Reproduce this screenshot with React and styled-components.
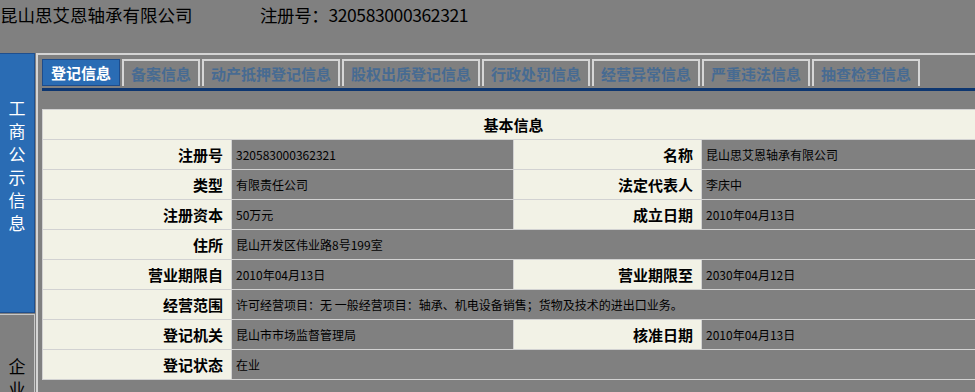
import styled, { createGlobalStyle } from "styled-components";

const GlobalStyle = createGlobalStyle`
	html, body {
		margin: 0;
		padding: 0;
		background: #808080;
		overflow: hidden;
	}
	body {
		font-family: "Noto Sans CJK SC", "Liberation Sans", sans-serif;
		color: #000;
	}
`;

const tabs = [
	"登记信息",
	"备案信息",
	"动产抵押登记信息",
	"股权出质登记信息",
	"行政处罚信息",
	"经营异常信息",
	"严重违法信息",
	"抽查检查信息",
];

const App = () => {
	return (
		<S.Page>
			<GlobalStyle />
			<S.Header>
				<S.Company>昆山思艾恩轴承有限公司</S.Company>
				<S.RegNo>注册号：320583000362321</S.RegNo>
			</S.Header>
			<S.Body>
				<S.Sidebar>
					<S.SideItem $active>
						<S.SideText>工商公示信息</S.SideText>
					</S.SideItem>
					<S.SideItem>
						<S.SideText>企业公示信息</S.SideText>
					</S.SideItem>
				</S.Sidebar>
				<S.Main>
					<S.Tabs>
						{tabs.map((t, i) => (
							<S.Tab key={t} $active={i === 0}>
								{t}
							</S.Tab>
						))}
					</S.Tabs>
					<S.TabLine />
					<S.InfoTable>
						<colgroup>
							<S.Col $w={189} />
							<S.Col $w={282} />
							<S.Col $w={188} />
							<S.Col $w={283} />
						</colgroup>
						<tbody>
							<tr>
								<S.HeadCell colSpan={4}>基本信息</S.HeadCell>
							</tr>
							<tr>
								<S.Label>注册号</S.Label>
								<S.Value>320583000362321</S.Value>
								<S.Label>名称</S.Label>
								<S.Value>昆山思艾恩轴承有限公司</S.Value>
							</tr>
							<tr>
								<S.Label>类型</S.Label>
								<S.Value>有限责任公司</S.Value>
								<S.Label>法定代表人</S.Label>
								<S.Value>李庆中</S.Value>
							</tr>
							<tr>
								<S.Label>注册资本</S.Label>
								<S.Value>50万元</S.Value>
								<S.Label>成立日期</S.Label>
								<S.Value>2010年04月13日</S.Value>
							</tr>
							<tr>
								<S.Label>住所</S.Label>
								<S.Value colSpan={3}>昆山开发区伟业路8号199室</S.Value>
							</tr>
							<tr>
								<S.Label>营业期限自</S.Label>
								<S.Value>2010年04月13日</S.Value>
								<S.Label>营业期限至</S.Label>
								<S.Value>2030年04月12日</S.Value>
							</tr>
							<tr>
								<S.Label>经营范围</S.Label>
								<S.Value colSpan={3}>
									许可经营项目：无 一般经营项目：轴承、机电设备销售；货物及技术的进出口业务。
								</S.Value>
							</tr>
							<tr>
								<S.Label>登记机关</S.Label>
								<S.Value>昆山市市场监督管理局</S.Value>
								<S.Label>核准日期</S.Label>
								<S.Value>2010年04月13日</S.Value>
							</tr>
							<tr>
								<S.Label>登记状态</S.Label>
								<S.Value colSpan={3}>在业</S.Value>
							</tr>
						</tbody>
					</S.InfoTable>
				</S.Main>
			</S.Body>
		</S.Page>
	);
};

export default App;

const Page = styled.div`
	width: 1000px;
	height: 392px;
	overflow: hidden;
`;

const Header = styled.div`
	display: flex;
	align-items: flex-start;
	height: 53px;
	font-size: 17.5px;
	line-height: 29px;
	white-space: nowrap;
`;

const Company = styled.div`
	width: 260px;
`;

const RegNo = styled.div`
	letter-spacing: -0.4px;
`;

const Body = styled.div`
	display: flex;
	align-items: flex-start;
`;

const Sidebar = styled.div`
	width: 35px;
	display: flex;
	flex-direction: column;
	gap: 1px;
`;

const SideItem = styled.div`
	box-sizing: border-box;
	height: ${p => (p.$active ? "260px" : "120px")};
	background: ${p => (p.$active ? "#2a6cb4" : "#808080")};
	border: 1px solid ${p => (p.$active ? "#1f4f8e" : "#c8c8c8")};
	border-left: none;
	padding-top: ${p => (p.$active ? "42px" : "39px")};
	color: ${p => (p.$active ? "#fff" : "#000")};
`;

const SideText = styled.div`
	width: 17px;
	margin: 0 auto;
	font-size: 17px;
	line-height: 23px;
	text-align: center;
`;

const Main = styled.div`
	flex: 1;
	margin-left: 1px;
	height: 400px;
	border-left: 2px solid #d4d4d4;
	border-top: 2px solid #d4d4d4;
	padding: 4px 0 0 4px;
`;

const Tabs = styled.div`
	display: flex;
	gap: 2px;
	height: 27px;
`;

const Tab = styled.div`
	box-sizing: border-box;
	height: 27px;
	padding: ${p => (p.$active ? "0 8px" : "0 7px")};
	border: ${p => (p.$active ? "1px solid #1d4c8c" : "2px solid #d6d6d6")};
	border-bottom: ${p => (p.$active ? "1px solid #1d4c8c" : "none")};
	background: ${p => (p.$active ? "#2a6cb4" : "transparent")};
	color: ${p => (p.$active ? "#fff" : "#476b92")};
	font-size: 15px;
	font-weight: bold;
	line-height: 25px;
	white-space: nowrap;
`;

const TabLine = styled.div`
	margin-top: 2px;
	height: 3px;
	background: #0d3670;
`;

const InfoTable = styled.table`
	margin-top: 18px;
	width: 942px;
	table-layout: fixed;
	border-collapse: collapse;
	td {
		height: 30px;
		border: 1px solid #d2d2d2;
		box-sizing: border-box;
		white-space: nowrap;
	}
`;

const Col = styled.col`
	width: ${p => p.$w}px;
`;

const HeadCell = styled.td`
	background: #f2f2e6;
	text-align: center;
	font-size: 15px;
	font-weight: bold;
`;

const Label = styled.td`
	background: #f2f2e6;
	text-align: right;
	padding: 0 8px 0 0;
	font-size: 15px;
	font-weight: bold;
`;

const Value = styled.td`
	padding: 0 0 0 4px;
	font-size: 12px;
`;

const S = {
	Page,
	Header,
	Company,
	RegNo,
	Body,
	Sidebar,
	SideItem,
	SideText,
	Main,
	Tabs,
	Tab,
	TabLine,
	InfoTable,
	Col,
	HeadCell,
	Label,
	Value,
};
